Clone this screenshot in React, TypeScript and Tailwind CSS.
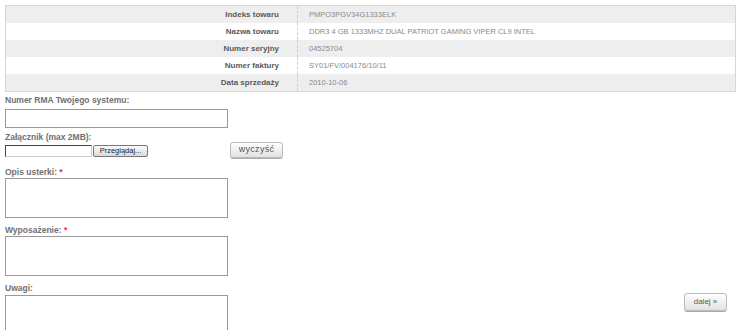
import React from "react";

const rows = [
  ["Indeks towaru", "PMPO3PGV34G1333ELK"],
  ["Nazwa towaru", "DDR3 4 GB 1333MHZ DUAL PATRIOT GAMING VIPER CL9 INTEL"],
  ["Numer seryjny", "04525704"],
  ["Numer faktury", "SY01/FV/004176/10/11"],
  ["Data sprzedaży", "2010-10-06"],
];

const font = { fontFamily: "'Liberation Sans', Arial, sans-serif" };

function Label({ text, req }: { text: string; req?: boolean }) {
  return (
    <div className="h-[11px] text-[8.5px] font-bold text-[#707070] leading-[11px]">
      {text}
      {req && <span className="text-[#d33]"> *</span>}
    </div>
  );
}

export default function App() {
  return (
    <div className="relative w-[738px] h-[330px] bg-white overflow-hidden" style={font}>
      <div className="pt-[5px] pl-[5px] pr-[2px]">
        <div className="border border-[#d6d6d6]">
          {rows.map(([k, v], i) => (
            <div
              key={k}
              className={`flex h-[17px] items-center ${i % 2 === 0 ? "bg-[#eeeeee]" : "bg-white"}`}
            >
              <div className="w-[291px] shrink-0 text-right pr-[18px] text-[8px] font-bold text-[#5a5a5a]">
                {k}
              </div>
              <div className="self-stretch border-l border-dashed border-[#d0d0d0]" />
              <div className="pl-[11px] text-[7.5px] text-[#8a8a8a]">{v}</div>
            </div>
          ))}
        </div>
      </div>

      <div className="pl-[5px]">
        <div className="mt-[3px]">
          <Label text="Numer RMA Twojego systemu:" />
        </div>
        <div className="mt-[3px] w-[223px] h-[19px] border border-[#999]" />

        <div className="mt-[4px]">
          <Label text="Załącznik (max 2MB):" />
        </div>
        <div className="-mt-[1px] h-[16px] flex items-center">
          <div className="mt-[2px] w-[87px] h-[12px] border border-t-[#444] border-l-[#444] border-r-[#ccc] border-b-[#ccc]" />
          <div className="mt-[2px] ml-[1px] w-[55px] h-[12px] border border-[#777] rounded-[2px] bg-gradient-to-b from-[#fafafa] to-[#dadada] flex items-center justify-center text-[7.5px] text-[#222]">
            Przeglądaj...
          </div>
          <div className="ml-[82px] w-[53px] h-[16px] border border-[#bbb] rounded-[3px] bg-gradient-to-b from-white to-[#e2e2e2] shadow-[0_1px_0_#aaa] flex items-center justify-center text-[9px] tracking-[0.3px] text-[#555]">
            wyczyść
          </div>
        </div>

        <div className="mt-[9px]">
          <Label text="Opis usterki:" req />
        </div>
        <div className="w-[223px] h-[40px] border border-[#999]" />

        <div className="mt-[7px]">
          <Label text="Wyposażenie:" req />
        </div>
        <div className="w-[223px] h-[40px] border border-[#999]" />

        <div className="mt-[7px]">
          <Label text="Uwagi:" />
        </div>
        <div className="mt-[1px] w-[223px] h-[40px] border border-[#999]" />
      </div>

      <div className="absolute left-[684px] top-[293px] w-[43px] h-[18px] border border-[#bbb] rounded-[3px] bg-gradient-to-b from-white to-[#e2e2e2] shadow-[0_1px_0_#aaa] flex items-center justify-center text-[8px] text-[#555]">
        dalej »
      </div>
    </div>
  );
}
